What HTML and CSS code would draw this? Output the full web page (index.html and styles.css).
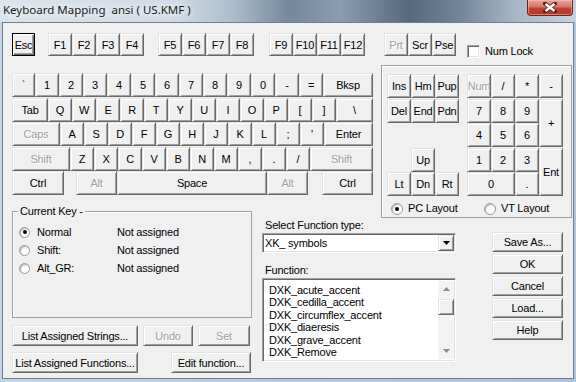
FILE: index.html
```html
<!DOCTYPE html>
<html>
<head>
  <title>Keyboard Mapping</title>
  <link rel="stylesheet" href="styles.css">
</head>
<body>
  <div class="window">
    <div class="titlebar">
      <span class="title">Keyboard Mapping  ansi ( US.KMF )</span>
      <div class="close">
        <svg width="14" height="11" viewBox="0 0 14 11">
          <path d="M2 1.5 L12 9.5 M12 1.5 L2 9.5" stroke="#5b2018" stroke-width="4" stroke-linecap="square"/>
          <path d="M2.5 2 L11.5 9 M11.5 2 L2.5 9" stroke="#fff" stroke-width="2.4"/>
        </svg>
      </div>
    </div>

    <div class="client">
      <div class="fkeys">
        <button class="key default">Esc</button>
        <div class="fgroup first">
          <button class="key">F1</button>
          <button class="key">F2</button>
          <button class="key">F3</button>
          <button class="key">F4</button>
        </div>
        <div class="fgroup second">
          <button class="key">F5</button>
          <button class="key">F6</button>
          <button class="key">F7</button>
          <button class="key">F8</button>
        </div>
        <div class="fgroup third">
          <button class="key">F9</button>
          <button class="key">F10</button>
          <button class="key">F11</button>
          <button class="key">F12</button>
        </div>
        <div class="fgroup sys">
          <button class="key disabled">Prt</button>
          <button class="key">Scr</button>
          <button class="key">Pse</button>
        </div>
        <label class="check"><span class="checkbox"></span>Num Lock</label>
      </div>

      <div class="middle">
        <div class="keyboard">
          <div class="krow">
            <button class="key narrow">`</button>
            <button class="key">1</button>
            <button class="key">2</button>
            <button class="key">3</button>
            <button class="key">4</button>
            <button class="key">5</button>
            <button class="key">6</button>
            <button class="key">7</button>
            <button class="key">8</button>
            <button class="key">9</button>
            <button class="key">0</button>
            <button class="key">-</button>
            <button class="key">=</button>
            <button class="key bksp">Bksp</button>
          </div>
          <div class="krow">
            <button class="key tab">Tab</button>
            <button class="key">Q</button>
            <button class="key">W</button>
            <button class="key">E</button>
            <button class="key">R</button>
            <button class="key">T</button>
            <button class="key">Y</button>
            <button class="key">U</button>
            <button class="key">I</button>
            <button class="key">O</button>
            <button class="key">P</button>
            <button class="key">[</button>
            <button class="key">]</button>
            <button class="key backslash">\</button>
          </div>
          <div class="krow">
            <button class="key caps disabled">Caps</button>
            <button class="key">A</button>
            <button class="key">S</button>
            <button class="key">D</button>
            <button class="key">F</button>
            <button class="key">G</button>
            <button class="key">H</button>
            <button class="key">J</button>
            <button class="key">K</button>
            <button class="key">L</button>
            <button class="key">;</button>
            <button class="key">'</button>
            <button class="key enter">Enter</button>
          </div>
          <div class="krow">
            <button class="key lshift disabled">Shift</button>
            <button class="key">Z</button>
            <button class="key">X</button>
            <button class="key">C</button>
            <button class="key">V</button>
            <button class="key">B</button>
            <button class="key">N</button>
            <button class="key">M</button>
            <button class="key">,</button>
            <button class="key">.</button>
            <button class="key">/</button>
            <button class="key rshift disabled">Shift</button>
          </div>
          <div class="krow">
            <button class="key lctrl">Ctrl</button>
            <button class="key lalt disabled">Alt</button>
            <button class="key space">Space</button>
            <button class="key ralt disabled">Alt</button>
            <button class="key rctrl">Ctrl</button>
          </div>
        </div>

        <div class="numgroup">
          <div class="pads">
            <div class="nav">
              <button class="key">Ins</button>
              <button class="key">Hm</button>
              <button class="key">Pup</button>
              <button class="key">Del</button>
              <button class="key">End</button>
              <button class="key">Pdn</button>
              <button class="key up">Up</button>
              <button class="key lt">Lt</button>
              <button class="key dn">Dn</button>
              <button class="key rt">Rt</button>
            </div>
            <div class="numpad">
              <button class="key disabled">Num</button>
              <button class="key">/</button>
              <button class="key">*</button>
              <button class="key">-</button>
              <button class="key">7</button>
              <button class="key">8</button>
              <button class="key">9</button>
              <button class="key plus">+</button>
              <button class="key">4</button>
              <button class="key">5</button>
              <button class="key">6</button>
              <button class="key">1</button>
              <button class="key">2</button>
              <button class="key">3</button>
              <button class="key ent">Ent</button>
              <button class="key zero">0</button>
              <button class="key">.</button>
            </div>
          </div>
          <div class="layouts">
            <label class="option pc"><span class="radio checked"></span>PC Layout</label>
            <label class="option"><span class="radio"></span>VT Layout</label>
          </div>
        </div>
      </div>

      <div class="bottom">
        <div class="col-left">
          <div class="group">
            <span class="group-label">Current Key -</span>
            <div class="keyrow">
              <label class="option"><span class="radio checked"></span>Normal</label>
              <span>Not assigned</span>
            </div>
            <div class="keyrow">
              <label class="option"><span class="radio"></span>Shift:</label>
              <span>Not assigned</span>
            </div>
            <div class="keyrow">
              <label class="option"><span class="radio"></span>Alt_GR:</label>
              <span>Not assigned</span>
            </div>
          </div>
          <div class="btnrow">
            <button class="btn list">List Assigned Strings...</button>
            <button class="btn undo disabled">Undo</button>
            <button class="btn set disabled">Set</button>
          </div>
          <div class="btnrow spread">
            <button class="btn list">List Assigned Functions...</button>
            <button class="btn edit">Edit function...</button>
          </div>
        </div>

        <div class="col-mid">
          <div class="field-label">Select Function type:</div>
          <div class="combo">
            <span class="combo-text">XK_ symbols</span>
            <span class="combo-btn">
              <svg width="7" height="4" viewBox="0 0 7 4"><polygon points="0,0 7,0 3.5,4" fill="#000"/></svg>
            </span>
          </div>
          <div class="field-label second">Function:</div>
          <div class="listbox">
            <div class="items">
              <div>DXK_acute_accent</div>
              <div>DXK_cedilla_accent</div>
              <div>DXK_circumflex_accent</div>
              <div>DXK_diaeresis</div>
              <div>DXK_grave_accent</div>
              <div>DXK_Remove</div>
            </div>
            <div class="scrollbar">
              <span class="arrow">
                <svg width="7" height="4" viewBox="0 0 7 4"><polygon points="0,4 7,4 3.5,0" fill="#8a8a8a"/></svg>
              </span>
              <span class="thumb"></span>
              <span class="track"></span>
              <span class="arrow">
                <svg width="7" height="4" viewBox="0 0 7 4"><polygon points="0,0 7,0 3.5,4" fill="#8a8a8a"/></svg>
              </span>
            </div>
          </div>
        </div>

        <div class="col-right">
          <button class="btn">Save As...</button>
          <button class="btn">OK</button>
          <button class="btn">Cancel</button>
          <button class="btn">Load...</button>
          <button class="btn">Help</button>
        </div>
      </div>
    </div>
  </div>
</body>
</html>
```

FILE: styles.css
```css
* {
  box-sizing: border-box;
}

body {
  margin: 0;
  width: 576px;
  height: 382px;
  overflow: hidden;
  font-family: "Liberation Sans", Arial, sans-serif;
  font-size: 11px;
  letter-spacing: -0.2px;
  color: #000;
}

.window {
  height: 382px;
  display: flex;
  flex-direction: column;
  background: linear-gradient(90deg, #c3d5e8, #b6cbe0 50%, #adc4dc);
}

/* title bar */

.titlebar {
  height: 22px;
  display: flex;
  justify-content: space-between;
  align-items: flex-start;
  background: linear-gradient(90deg, #dbe3ec 0, #d2dce6 170px, #aebfcf 230px, #74889e 290px, #8a9cb0 340px, #55697f 410px, #71859b 460px, #a7b7c8 515px, #c4d2e0 576px);
}

.title {
  white-space: pre;
  font-family: "Noto Sans", sans-serif;
  font-size: 11.5px;
  letter-spacing: 0;
  line-height: 16px;
  padding: 2px 0 0 3px;
  color: #1b1b1b;
  text-shadow: 0 0 6px #fff, 0 0 10px #eef3f8;
}

.close {
  width: 46px;
  height: 16px;
  margin-right: 3px;
  border: 1px solid #6a2519;
  border-top: none;
  border-radius: 0 0 4px 4px;
  background: linear-gradient(#e7a596, #d5786a 45%, #c2412f 55%, #b3362a);
  box-shadow: inset 0 0 0 1px rgba(255, 200, 190, 0.5);
  display: flex;
  align-items: center;
  justify-content: center;
}

/* dialog */

.client {
  flex: 1;
  margin: 0 2px 3px;
  border: 1px solid #6f7f92;
  background: #f0f0f0;
  padding: 10px 0 0 9px;
}

.key,
.btn {
  width: 24px;
  height: 24px;
  padding: 0;
  font: inherit;
  letter-spacing: inherit;
  color: #000;
  background: #f0f0f0;
  border: 1px solid;
  border-color: #e3e3e3 #696969 #696969 #e3e3e3;
  box-shadow: inset 1px 1px #fff, inset -1px -1px #a0a0a0;
  display: flex;
  align-items: center;
  justify-content: center;
  white-space: nowrap;
  overflow: hidden;
}

.disabled {
  color: #a0a0a0;
  text-shadow: 1px 1px #fff;
}

.key.default {
  border-color: #000;
  box-shadow: inset 1px 1px #fff, inset -1px -1px #696969, inset -2px -2px #a0a0a0;
}

/* function key row */

.fkeys {
  display: flex;
  align-items: flex-start;
  height: 23px;
}

.fkeys .key {
  height: 23px;
}

.fkeys .default {
  width: 23px;
}

.fgroup {
  display: flex;
}

.fgroup.first { margin-left: 13px; }
.fgroup.second { margin-left: 14px; }
.fgroup.third { margin-left: 15px; }
.fgroup.sys { margin-left: 19px; }

.check {
  display: flex;
  align-items: center;
  margin: 12px 0 0 11px;
  line-height: 13px;
}

.checkbox,
.combo,
.listbox {
  background: #fff;
  border: 1px solid;
  border-color: #a0a0a0 #fff #fff #a0a0a0;
  box-shadow: inset 1px 1px #696969, inset -1px -1px #e3e3e3;
}

.checkbox {
  width: 13px;
  height: 13px;
  margin-right: 5px;
}

/* main keyboard */

.middle {
  display: flex;
  align-items: flex-start;
  height: 146px;
  margin-top: 9px;
}

.keyboard {
  width: 361px;
  margin-top: 8px;
  display: grid;
  grid-auto-rows: 24px;
  row-gap: 0.6px;
}

.krow {
  display: flex;
}

.key.narrow { width: 23px; }
.key.bksp { width: 50px; }
.key.tab { width: 36px; }
.key.backslash { width: 37px; }
.key.caps { width: 48px; }
.key.enter { width: 49px; }
.key.lshift { width: 58px; }
.key.rshift { width: 63px; }
.key.lctrl { width: 52px; }
.key.lalt { width: 41px; margin-left: 12px; }
.key.space { width: 150px; }
.key.ralt { width: 41px; }
.key.rctrl { width: 51px; margin-left: 14px; }

/* numeric pad */

.numgroup {
  width: 191px;
  height: 153px;
  margin-left: 8px;
  border: 1px solid #a0a0a0;
  box-shadow: inset 1px 1px #fff;
  padding: 8px 0 0 5px;
}

.pads {
  display: flex;
  gap: 8px;
}

.nav,
.numpad {
  display: grid;
  grid-template-columns: repeat(3, 24px);
  grid-template-rows: repeat(5, 24px);
  row-gap: 0.6px;
}

.numpad {
  grid-template-columns: repeat(4, 24px);
}

.nav .up { grid-row: 4; grid-column: 2; }
.nav .lt { grid-row: 5; grid-column: 1; }
.nav .dn { grid-row: 5; grid-column: 2; }
.nav .rt { grid-row: 5; grid-column: 3; }

.key.plus,
.key.ent {
  grid-row: span 2;
  height: auto;
  width: 24px;
}

.key.zero {
  grid-column: span 2;
  width: auto;
}

.numpad .key {
  height: auto;
}

.layouts {
  display: flex;
  margin-top: 6px;
  padding-left: 4px;
}

.layouts .pc {
  width: 93px;
}

.option {
  display: flex;
  align-items: center;
  line-height: 13px;
}

.radio {
  position: relative;
  width: 12px;
  height: 12px;
  margin-right: 5px;
  border-radius: 50%;
  border: 1px solid #9a9a9a;
  background: radial-gradient(circle at 60% 60%, #fff 40%, #e6e6e6);
  box-shadow: inset 1px 1px 1px #b8b8b8;
}

.radio.checked::after {
  content: "";
  position: absolute;
  left: 3px;
  top: 3px;
  width: 4px;
  height: 4px;
  border-radius: 50%;
  background: #000;
}

/* lower part */

.bottom {
  display: flex;
  align-items: flex-start;
}

.col-left {
  width: 240px;
}

.group {
  position: relative;
  height: 107px;
  border: 1px solid #a0a0a0;
  box-shadow: inset 1px 1px #fff;
  padding: 11px 0 0 6px;
}

.group-label {
  position: absolute;
  top: -7px;
  left: 5px;
  padding: 0 2px 0 2px;
  line-height: 13px;
  background: #f0f0f0;
}

.keyrow {
  display: grid;
  grid-template-columns: 98px auto;
  align-items: center;
  height: 18px;
}

.keyrow .radio {
  width: 11px;
  height: 11px;
  margin-right: 7px;
}

.keyrow .radio.checked::after {
  left: 2.5px;
  top: 2.5px;
}

.btnrow {
  display: flex;
  gap: 5px;
  margin-top: 7px;
}

.btnrow.spread {
  justify-content: space-between;
  width: 239px;
  margin-top: 6px;
}

.btn {
  height: 21px;
}

.btn.list { width: 126px; }
.btn.undo { width: 50px; }
.btn.set { width: 52px; }
.btn.edit { width: 80px; }

.col-mid {
  width: 194px;
  margin-left: 10px;
}

.field-label {
  line-height: 13px;
  margin-top: 8px;
  padding-left: 3px;
}

.field-label.second {
  margin-top: 11px;
}

.combo {
  display: flex;
  height: 20px;
  margin-top: 1px;
  padding: 1px 1px 1px 2px;
}

.combo-text {
  flex: 1;
  line-height: 16px;
}

.combo-btn {
  width: 16px;
  height: 16px;
  background: #f0f0f0;
  border: 1px solid;
  border-color: #e3e3e3 #696969 #696969 #e3e3e3;
  box-shadow: inset 1px 1px #fff, inset -1px -1px #a0a0a0;
  display: flex;
  align-items: center;
  justify-content: center;
}

.listbox {
  display: flex;
  height: 84px;
  margin-top: 1px;
  padding: 2px 1px 2px 2px;
}

.items {
  flex: 1;
  padding: 3px 0 0 4px;
  line-height: 12.4px;
  overflow: hidden;
}

.scrollbar {
  width: 16px;
  display: flex;
  flex-direction: column;
  background: #f4f4f4;
}

.arrow {
  height: 16px;
  display: flex;
  align-items: center;
  justify-content: center;
}

.thumb {
  height: 16px;
  margin-top: 2px;
  background: #f0f0f0;
  border: 1px solid;
  border-color: #e3e3e3 #696969 #696969 #e3e3e3;
  box-shadow: inset 1px 1px #fff, inset -1px -1px #a0a0a0;
}

.track {
  flex: 1;
}

.col-right {
  width: 71px;
  margin-left: 36px;
  padding-top: 21px;
  display: flex;
  flex-direction: column;
  gap: 2px;
}

.col-right .btn {
  width: 71px;
  height: 20px;
}
```
